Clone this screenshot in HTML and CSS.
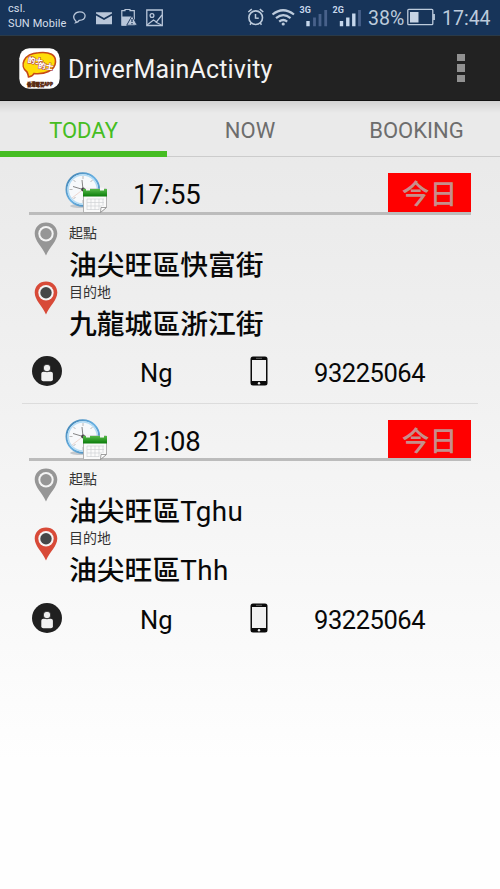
FILE: index.html
```html
<!DOCTYPE html>
<html lang="zh-Hant">
<head>
<meta charset="utf-8">
<title>DriverMainActivity</title>
<link rel="stylesheet" href="styles.css">
</head>
<body>
<svg class="defs" aria-hidden="true">
  <defs>
    <linearGradient id="rim" x1="0" y1="0" x2="1" y2="1"><stop offset="0" stop-color="#3f7fae"/><stop offset=".5" stop-color="#69b2e4"/><stop offset="1" stop-color="#3f79a6"/></linearGradient>
    <linearGradient id="leaf" x1="0" y1="0" x2="0" y2="1"><stop offset="0" stop-color="#55b948"/><stop offset="1" stop-color="#0a7c0a"/></linearGradient>
    <symbol id="clock" viewBox="0 0 44 44">
      <ellipse cx="17" cy="35" rx="12" ry="2" fill="#c4c8cc"/>
      <circle cx="17.800" cy="18.500" r="16.300" fill="#f7f9fb" stroke="url(#rim)" stroke-width="2"/>
      <circle cx="17.800" cy="18.500" r="14.600" fill="none" stroke="#b4dcf5" stroke-width="1.500"/>
      <path d="M18 5v3M18 29v3M4.500 18.500h3M28 18.500h3M8.500 9l2 2M27.500 9l-2 2M8.500 28l2-2" stroke="#aaa" stroke-width=".8"/>
      <path d="M18 18.500L17 9M18 18.500L8 15.500" stroke="#777" stroke-width=".9"/>
      <path d="M18 18.500L7 27" stroke="#e2b5a5" stroke-width=".5"/>
      <circle cx="18.200" cy="18.500" r="2" fill="#444"/>
      <path d="M18.500 18h23v18l-6 5.500h-17z" fill="#fafafa" stroke="#aaa" stroke-width=".9"/>
      <path d="M18 18h24v7.500h-24z" fill="url(#leaf)"/>
      <path d="M21 16.500h4v3h-4zM35 16.500h4v3h-4z" fill="#f4f4f4"/>
      <path d="M22 28h17M22 31.500h17M22 35h15M22 38.500h12M22 28v11M26 28v11M30 28v11M34 28v11M38 28v7" stroke="#d0d2d5" stroke-width=".7"/>
      <path d="M35.500 41.500l.5-5h5.500z" fill="#fff" stroke="#888" stroke-width=".8"/>
    </symbol>
    <symbol id="pin" viewBox="0 0 24 34">
      <path d="M12 .5C5.400.500.700 5.300.700 11.500.700 19 8 24.500 12 33.500 16 24.500 23.300 19 23.300 11.500 23.300 5.300 18.600.500 12 .5z" fill="currentColor"/>
      <circle cx="12" cy="11.800" r="7.700" fill="#f4f4f4"/>
      <circle cx="12" cy="11.800" r="5.700"/>
    </symbol>
    <symbol id="person" viewBox="0 0 30 30">
      <circle cx="15" cy="15" r="15" fill="#202020"/>
      <rect x="9.300" y="15.800" width="11.600" height="9.400" rx="2" fill="#f0f0f0"/>
      <circle cx="15" cy="12" r="3.800" fill="#f0f0f0" stroke="#202020" stroke-width=".9"/>
    </symbol>
    <symbol id="phone" viewBox="0 0 18 30">
      <rect x=".5" y=".5" width="17" height="29" rx="2.500" fill="#0b0b0b"/>
      <rect x="2" y="4" width="14" height="21" fill="#f1f1f1"/>
      <path d="M6 2.300h6" stroke="#777" stroke-width=".8"/>
      <circle cx="9" cy="27.300" r="1.200" fill="#eee"/>
    </symbol>
  </defs>
</svg>

<header class="status">
  <div class="carrier"><span>csl.</span><span>SUN Mobile</span></div>
  <svg class="notices" viewBox="0 0 92 20" fill="none" stroke="#b9c6d9" stroke-width="1.300">
    <path d="M3.700 13c-4.500-4.500-.5-9.200 4-9.200 7.500 0 7 8.500-.5 8.500-.7 1.200-1.700 1.900-3.300 2.200.5-.5.300-.9-.2-1.500z"/>
    <path d="M24 4.200h16v1.300l-8 4.500-8-4.500zM24 7.500l8 4.500 8-4.500v8.700H24z" fill="#b9c6d9" stroke="none"/>
    <path d="M49.800 2.700h3.200V1.500h5v1.200h4.300v14.500H49.800z" stroke-width="1.200"/>
    <path d="M50 8.500h11v9H50z" fill="#b9c6d9" stroke="none"/>
    <path d="M60 7.800l5.300 9.500H54.700z" fill="#b9c6d9" stroke="#173257" stroke-width=".9"/>
    <path d="M60 11v3M60 15v1.200" stroke="#173257" stroke-width="1.200"/>
    <path d="M74.800 2h15.500v15.500H74.800z"/>
    <circle cx="80" cy="7.500" r="1.900"/>
    <path d="M75 17l6.500-5 3 2L90 7M83.500 14l6 3"/>
  </svg>
  <svg class="signals" viewBox="0 0 118 26" fill="none" stroke="#bdcbdc">
    <circle cx="8.700" cy="14.700" r="6.800" stroke-width="1.600"/>
    <path d="M8.500 11v4l3.200.2" stroke-width="1.500"/>
    <path d="M1.300 9l3.500-2.800M12.800 6.200l3.500 2.800M4.300 20l-1.300 1.700M13.200 20l1.300 1.700" stroke-width="1.500"/>
    <path d="M25.500 11.500q10.500-8.500 21.500 0M29 15.200q7.300-6 14.500 0M32.200 18.700q4-3.400 8 0" stroke-width="2.200"/>
    <circle cx="36.200" cy="21" r="1.600" fill="#bdcbdc" stroke="none"/>
    <path d="M61 18v5.300M94.500 18v5.300M100.800 14.500v8.800M106.800 10.500v12.800" stroke-width="3.400" stroke="#c6d7ec"/>
    <path d="M67.500 14.500v8.800M73 11v12.300M78.700 7v16.300M112.500 7v16.300" stroke-width="2.800" stroke="#48618a"/>
    <text x="52.500" y="10.300">3G</text><text x="85.500" y="10.300">2G</text>
  </svg>
  <span class="percent">38%</span>
  <svg class="battery" viewBox="0 0 28 18"><rect x=".8" y="1.300" width="25" height="15.400" rx="1" fill="none" stroke="#bdcbdc" stroke-width="1.300"/><path d="M3 4h8.500v10.500H3z" fill="#c6d3e3"/><path d="M27 6v6" stroke="#bdcbdc" stroke-width="1.800"/></svg>
  <span class="time">17:44</span>
</header>

<div class="appbar">
  <svg class="logo" viewBox="0 0 41 41">
    <rect x=".3" y=".3" width="40.400" height="40.400" rx="10" fill="#fff"/>
    <path d="M9.500 29c-.3-2-.7-3.500-1.500-5C0 18 4.500 5.500 19.500 4.800 31 3.500 37 7 36.500 14c-.5 9-11 12.500-21.500 11.500-1 2-3 3.300-5.500 3.500z" fill="#ffdd09" stroke="#c64a14" stroke-width="1.600"/>
    <g transform="rotate(8 20 16)"><text class="logo-word" x="8.500" y="16">的士</text><text class="logo-word" x="19.500" y="20">的士</text></g>
    <text class="logo-caption" x="8" y="38">香港電召APP</text>
  </svg>
  <h1>DriverMainActivity</h1>
  <div class="overflow"><i></i><i></i><i></i></div>
</div>

<nav class="tabs"><span class="tab active">TODAY</span><span class="tab">NOW</span><span class="tab">BOOKING</span></nav>

<main>
  <section class="trip">
    <div class="trip-head"><svg class="clock"><use href="#clock"/></svg><span class="when">17:55</span><span class="badge">今日</span></div>
    <div class="stop"><svg class="pin start"><use href="#pin"/></svg><div><div class="label">起點</div><div class="place">油尖旺區快富街</div></div></div>
    <div class="stop"><svg class="pin end"><use href="#pin"/></svg><div><div class="label">目的地</div><div class="place">九龍城區浙江街</div></div></div>
    <div class="contact"><svg class="person"><use href="#person"/></svg><span class="name">Ng</span><svg class="phone"><use href="#phone"/></svg><span class="number">93225064</span></div>
  </section>
  <section class="trip">
    <div class="trip-head"><svg class="clock"><use href="#clock"/></svg><span class="when">21:08</span><span class="badge">今日</span></div>
    <div class="stop"><svg class="pin start"><use href="#pin"/></svg><div><div class="label">起點</div><div class="place">油尖旺區<span class="latin">Tghu</span></div></div></div>
    <div class="stop"><svg class="pin end"><use href="#pin"/></svg><div><div class="label">目的地</div><div class="place">油尖旺區<span class="latin">Thh</span></div></div></div>
    <div class="contact"><svg class="person"><use href="#person"/></svg><span class="name">Ng</span><svg class="phone"><use href="#phone"/></svg><span class="number">93225064</span></div>
  </section>
</main>
</body>
</html>
```
FILE: styles.css
```css
* { box-sizing: border-box; }
body {
  margin: 0;
  height: 889px;
  overflow: hidden;
  font-family: Roboto, "Noto Sans CJK TC", sans-serif;
  color: #080808;
  background: linear-gradient(#e8e8e8 100px, #f0f0f0 360px, #fefefe 760px);
}
svg { display: block; flex: none; }
.defs { position: absolute; width: 0; height: 0; }

.status {
  display: flex;
  height: 36px;
  padding: 0 9px 0 8px;
  background: #173459;
  color: #bdcbdc;
  border-bottom: 1px solid #2a3a48;
}
.carrier { width: 64px; padding-top: 1px; font-size: 11px; line-height: 15px; letter-spacing: .1px; color: #d5dfeb; white-space: nowrap; }
.carrier span { display: block; }
.notices { width: 92px; height: 20px; margin: 8px 0 0 0; }
.signals { width: 118px; height: 26px; margin: 3px 0 0 83px; }
.signals text { font: 700 9px Roboto, sans-serif; fill: #c6d7ec; stroke: none; }
.percent { width: 39px; margin-left: 3px; font-size: 19.500px; line-height: 38px; }
.battery { width: 28px; height: 18px; margin-top: 8px; }
.time { margin-left: 7px; font-size: 19.500px; line-height: 38px; }

.appbar {
  display: flex;
  align-items: center;
  height: 65px;
  padding: 0 34px 0 19px;
  background: #222;
  border-bottom: 1px solid #111;
}
.logo { width: 41px; height: 41px; }
.logo-word { font: 900 7.500px "Noto Sans CJK TC", sans-serif; fill: #fff; stroke: #b14432; stroke-width: 1; paint-order: stroke; }
.logo-caption { font: 900 4.300px "Noto Sans CJK TC", sans-serif; fill: #5a2b12; stroke: #5a2b12; stroke-width: .5; }
h1 { margin: 3px 0 0 8px; font-size: 25px; font-weight: 400; line-height: 36px; letter-spacing: .15px; color: #f3f3f3; white-space: nowrap; }
.overflow { display: grid; gap: 3px; margin-left: auto; padding-right: 1px; }
.overflow i { width: 8px; height: 7.500px; background: #919191; }

.tabs {
  display: grid;
  grid-template-columns: 167px 166px 167px;
  height: 56px;
  background: linear-gradient(#d2d2d2, #eaeaea 12px);
}
.tab { height: 56px; padding-top: 1px; text-align: center; font-size: 22px; line-height: 57px; color: #6d6d6d; border-bottom: 1px solid #ccc; }
.tab.active { color: #45bd22; border-bottom: 6px solid #45bd22; }

.trip { height: 247px; padding: 16px 29px 0; background: linear-gradient(#dcdcdc, #dcdcdc) 50% 100% / 456px 1px no-repeat; }
.trip:last-child { background: none; }
.trip-head { display: flex; width: 442px; height: 42px; border-bottom: 3px solid #bcbcbc; }
.trip:last-child .trip-head { height: 41px; }
.trip:last-child .badge { height: 38px; }
.clock { width: 44px; height: 44px; margin: -2px 0 0 36px; }
.when { margin-left: 24px; font-size: 27.500px; line-height: 44px; letter-spacing: -.2px; }
.badge { width: 83px; height: 39px; margin-left: auto; background: #f00; color: #c68e8b; text-align: center; font-size: 27.800px; font-weight: 500; line-height: 43px; }
.stop { display: flex; height: 59px; }
.pin { width: 24px; height: 34px; margin: 7px 11px 0 5px; }
.start { color: #969696; fill: #969696; }
.end { color: #d84a38; fill: #454748; }
.label { padding-top: 10px; height: 30px; font-size: 14px; line-height: 17px; color: #333; }
.place { font-size: 27.800px; font-weight: 500; line-height: 41px; white-space: nowrap; }
.latin { font-weight: 400; letter-spacing: .4px; }
.contact { display: flex; align-items: center; height: 34px; padding-left: 3px; margin-top: 21px; font-size: 25.500px; line-height: 34px; }
.trip:last-child .contact { margin-top: 22px; }
.contact span { padding-top: 4px; }
.person { width: 30px; height: 30px; }
.name { width: 188px; padding-left: 78px; }
.phone { width: 18px; height: 30px; }
.number { margin-left: 46px; letter-spacing: -.45px; }
```
